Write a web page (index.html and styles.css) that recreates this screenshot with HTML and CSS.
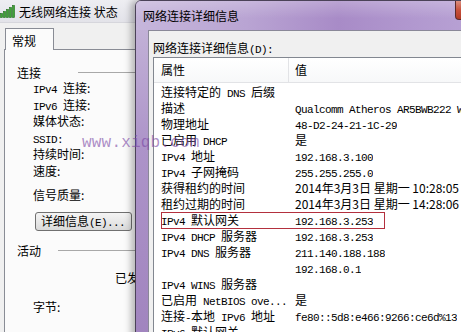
FILE: index.html
```html
<!DOCTYPE html>
<html>

<head>
  <meta http-equiv="Content-Type" content="text/html; charset=utf-8" />
  <title>网络连接详细信息</title>
  <link rel="stylesheet" href="styles.css">
</head>

<body>
  <div class="desk">
    <div class="win back">
      <div class="cap">
        <svg class="signal" width="15" height="14" viewBox="0 0 15 14">
          <rect x="0.5" y="9.5" width="2" height="4" />
          <rect x="3.5" y="7.5" width="2" height="6" />
          <rect x="6.5" y="5.5" width="2" height="8" />
          <rect x="9.5" y="3.5" width="2" height="10" />
          <rect x="12.5" y="1.5" width="2" height="12" />
        </svg>
        <span>无线网络连接 状态</span>
      </div>
      <div class="body">
        <div class="tab">常规</div>
        <div class="panel">
          <div class="group"><span>连接</span><i class="line first"></i></div>
          <div class="items">
            <div><span class="en">IPv4 </span>连接:</div>
            <div><span class="en">IPv6 </span>连接:</div>
            <div>媒体状态:</div>
            <div><span class="en">SSID:</span></div>
            <div>持续时间:</div>
            <div>速度:</div>
            <div class="gap">信号质量:</div>
          </div>
          <button class="btn">详细信息<span class="en">(E)...</span></button>
          <div class="group act"><span>活动</span><i class="line"></i></div>
          <div class="sent">已发</div>
          <div class="bytes">字节:</div>
        </div>
      </div>
    </div>

    <div class="win front">
      <div class="cap">
        <span>网络连接详细信息</span>
        <i class="close"></i>
      </div>
      <div class="client">
        <div class="label">网络连接详细信息<span class="en">(D):</span></div>
        <div class="list">
          <div class="head">
            <div class="k">属性</div>
            <div class="v">值</div>
          </div>
          <div class="rows">
            <div class="row"><div class="k">连接特定的<span class="en"> DNS </span>后缀</div><div class="v"></div></div>
            <div class="row"><div class="k">描述</div><div class="v"><span class="en">Qualcomm Atheros AR5BWB222 Wireless Network Adapter</span></div></div>
            <div class="row"><div class="k">物理地址</div><div class="v"><span class="en">48-D2-24-21-1C-29</span></div></div>
            <div class="row"><div class="k">已启用<span class="en"> DHCP</span></div><div class="v">是</div></div>
            <div class="row"><div class="k"><span class="en">IPv4 </span>地址</div><div class="v"><span class="en">192.168.3.100</span></div></div>
            <div class="row"><div class="k"><span class="en">IPv4 </span>子网掩码</div><div class="v"><span class="en">255.255.255.0</span></div></div>
            <div class="row"><div class="k">获得租约的时间</div><div class="v">2014年3月3日 星期一 10:28:05</div></div>
            <div class="row"><div class="k">租约过期的时间</div><div class="v">2014年3月3日 星期一 14:28:06</div></div>
            <div class="row hl"><div class="k"><span class="en">IPv4 </span>默认网关</div><div class="v"><span class="en">192.168.3.253</span></div></div>
            <div class="row"><div class="k"><span class="en">IPv4 DHCP </span>服务器</div><div class="v"><span class="en">192.168.3.253</span></div></div>
            <div class="row"><div class="k"><span class="en">IPv4 DNS </span>服务器</div><div class="v"><span class="en">211.140.188.188</span></div></div>
            <div class="row"><div class="k"></div><div class="v"><span class="en">192.168.0.1</span></div></div>
            <div class="row"><div class="k"><span class="en">IPv4 WINS </span>服务器</div><div class="v"></div></div>
            <div class="row"><div class="k">已启用<span class="en"> NetBIOS ove...</span></div><div class="v">是</div></div>
            <div class="row"><div class="k">连接<span class="en">-</span>本地<span class="en"> IPv6 </span>地址</div><div class="v"><span class="en">fe80::5d8:e466:9266:ce6d%13</span></div></div>
            <div class="row"><div class="k"><span class="en">IPv6 </span>默认网关</div><div class="v"></div></div>
          </div>
        </div>
      </div>
    </div>

    <div class="mark">www.xiqb.com</div>
  </div>
</body>

</html>
```

FILE: styles.css
```css
body {
  margin: 0;
  background: #f0f0f0;
  font-family: "Noto Sans CJK SC", sans-serif;
  font-size: 12px;
  color: #000;
}

.desk {
  position: relative;
  width: 461px;
  height: 332px;
  overflow: hidden;
}

.en {
  font-family: "Liberation Mono", monospace;
  font-size: 11px;
  letter-spacing: -0.6px;
}

/* back window */
.back {
  position: absolute;
  left: 0;
  top: 0;
  width: 160px;
  height: 332px;
  background: #f0f0f0;
}

.back .cap {
  height: 22px;
  display: flex;
  align-items: center;
  gap: 4px;
  background: linear-gradient(#eeeef2, #e3e3e9);
  border-bottom: 1px solid #d6d6dc;
}

.signal rect {
  fill: #3fa336;
  stroke: #1d6b1a;
  stroke-width: 0.6;
}

.back .body {
  padding-top: 5px;
}

.tab {
  position: relative;
  z-index: 1;
  margin-left: 5px;
  margin-bottom: -1px;
  width: 49px;
  height: 22px;
  line-height: 24px;
  padding-left: 6px;
  box-sizing: border-box;
  border: 1px solid #898c95;
  border-bottom: none;
  background: #fbfbfb;
}

.panel {
  margin-left: 4px;
  height: 300px;
  border: 1px solid #898c95;
  border-right: none;
  background: #fbfbfb;
  padding: 14px 0 0 12px;
}

.group {
  display: flex;
  align-items: center;
  height: 16px;
}

.line {
  flex: 1;
  height: 1px;
  margin-left: 17px;
  background: #a8a8a8;
}

.line.first {
  margin-left: 37px;
}

.items {
  padding-left: 16px;
}

.items div {
  height: 16.6px;
  line-height: 16px;
}

.items .gap {
  margin-top: 7px;
}

.btn {
  display: block;
  margin: 9px 0 0 18px;
  width: 97px;
  height: 19px;
  padding: 0 0 0 5px;
  text-align: left;
  font: inherit;
  line-height: 16px;
  border: 1px solid #707070;
  border-radius: 3px;
  background: linear-gradient(#f4f4f4, #e8e8e8 50%, #dadada);
}

.group.act {
  margin-top: 11px;
}

.sent {
  margin-top: 12px;
  padding-left: 98px;
  height: 16px;
  line-height: 16px;
}

.bytes {
  margin-top: 13px;
  padding-left: 16px;
  height: 16px;
  line-height: 16px;
}

/* front window */
.front {
  position: absolute;
  left: 135px;
  top: 0;
  width: 368px;
  height: 360px;
  display: flex;
  flex-direction: column;
  border: 1px solid #4b4258;
  border-radius: 6px 6px 0 0;
  background: linear-gradient(#c7b8da, #ad94c9 40%, #9f82bd);
  box-shadow: -4px 0 7px rgba(0, 0, 0, 0.28);
}

.front .cap {
  height: 29px;
  display: flex;
  align-items: center;
  padding-left: 7px;
  border-radius: 5px 5px 0 0;
  background:
    linear-gradient(rgba(255, 255, 255, 0.22), rgba(255, 255, 255, 0) 60%),
    linear-gradient(90deg, #c6b6db, #b9a4d3 30%, #a88bc7 55%, #b198cf 75%, #bca7d7);
}

.close {
  margin-left: auto;
  margin-right: 6px;
  align-self: flex-start;
  width: 43px;
  height: 19px;
  box-sizing: border-box;
  border: 1px solid #5b2a2a;
  border-top: none;
  border-radius: 0 0 4px 4px;
  background: linear-gradient(#dc8e7e, #c7513c 50%, #b23a26);
}

.client {
  flex: 1;
  margin-left: 12px;
  border: 1px solid #8a8898;
  border-right: none;
  background: #f0f0f0;
  padding: 9px 0 0 4px;
}

.label {
  height: 16px;
  line-height: 16px;
}

.list {
  margin-top: 1px;
  height: 300px;
  border: 1px solid #828790;
  border-right: none;
  background: #fff;
}

.head {
  display: flex;
  height: 24px;
  line-height: 24px;
  border-bottom: 1px solid #e2e3e6;
  background: linear-gradient(#fff, #f7f8f9);
}

.head .k {
  width: 127px;
  padding-left: 7px;
  border-right: 1px solid #e2e3e6;
}

.head .v {
  padding-left: 6px;
}

.rows {
  padding-top: 1px;
}

.row {
  position: relative;
  display: flex;
  height: 16px;
  line-height: 16px;
  white-space: nowrap;
}

.row .k {
  width: 134px;
  padding-left: 7px;
  flex: none;
}

.row .v {
  overflow: hidden;
}

.hl::after {
  content: "";
  position: absolute;
  left: 7px;
  top: 0;
  width: 224px;
  height: 17px;
  box-sizing: border-box;
  border: 1px solid #b3303e;
}

.mark {
  position: absolute;
  left: 82px;
  top: 134px;
  font-family: "Liberation Mono", monospace;
  font-size: 16px;
  letter-spacing: 0.2px;
  color: rgba(122, 72, 165, 0.62);
}
```
